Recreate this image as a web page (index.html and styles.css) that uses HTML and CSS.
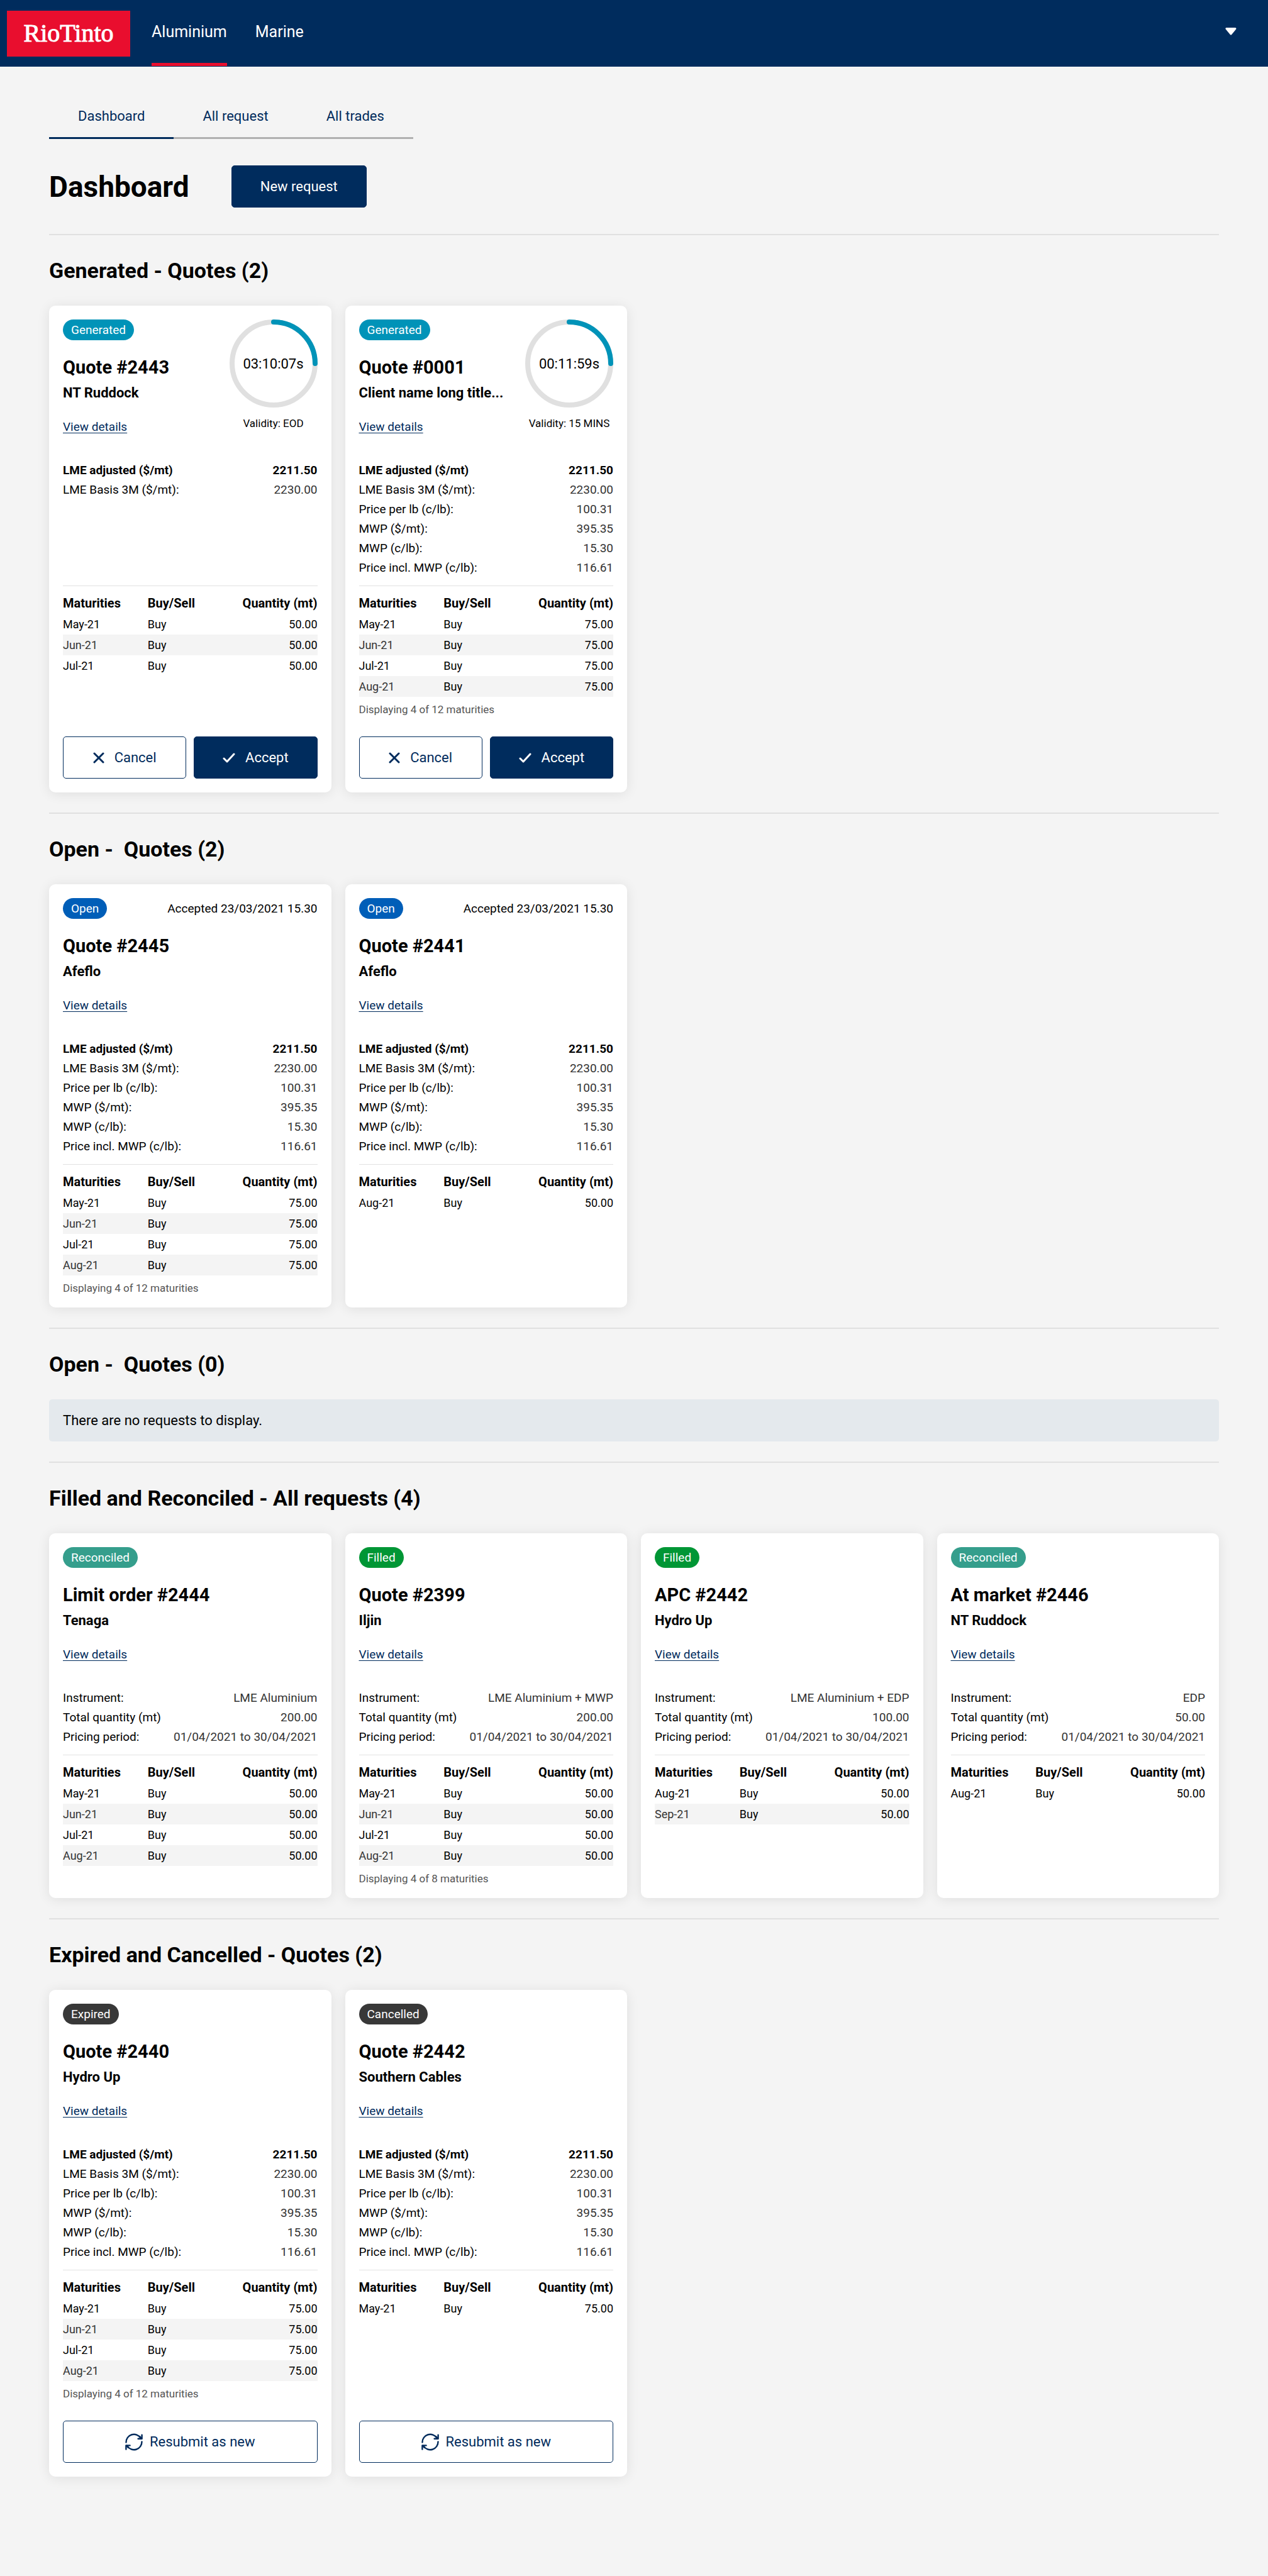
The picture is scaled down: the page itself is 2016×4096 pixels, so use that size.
FILE: index.html
```html
<!DOCTYPE html>
<html lang="en">
<head>
    <meta charset="UTF-8">
    <meta name="viewport" content="width=device-width, initial-scale=1.0">
    <title>Rio Tinto - Dashboard</title>
    <link rel="stylesheet" href="styles.css">
</head>
<body>
    <svg class="sprite" aria-hidden="true">
        <symbol id="icon-cross" viewBox="0 0 18 18">
            <path d="M2 2 L16 16 M16 2 L2 16" fill="none" stroke="currentColor" stroke-width="3" stroke-linecap="round"/>
        </symbol>
        <symbol id="icon-check" viewBox="0 0 20 18">
            <path d="M2 10 L7 15 L18 3" fill="none" stroke="currentColor" stroke-width="3" stroke-linecap="round" stroke-linejoin="round"/>
        </symbol>
        <symbol id="icon-refresh" viewBox="0 0 28 28">
            <g fill="none" stroke="currentColor" stroke-width="2.4" stroke-linecap="round" stroke-linejoin="round">
                <path d="M1.5 14.5 A12.5 12.5 0 0 1 24.6 7.6"/>
                <path d="M26.5 13.5 A12.5 12.5 0 0 1 3.4 20.4"/>
                <path d="M26.6 2.6 V8.8 H20.6"/>
                <path d="M1.4 25.6 V19.4 H7.6"/>
                <path d="M23 5.2 L26 8.2 M5 22.8 L2 19.8"/>
            </g>
        </symbol>
        <symbol id="icon-ring" viewBox="0 0 140 140">
            <circle cx="70" cy="70" r="66" fill="none" stroke="#e0e0e0" stroke-width="8"/>
            <path d="M70 4 A66 66 0 0 1 136 70" fill="none" stroke="#0093b8" stroke-width="8" stroke-linecap="round"/>
        </symbol>
    </svg>

    <header class="topbar">
        <a class="logo" href="#">RioTinto</a>
        <nav class="topnav">
            <a class="active" href="#">Aluminium</a>
            <a href="#">Marine</a>
        </nav>
        <button class="account" aria-label="Account menu">
            <svg width="18" height="12" viewBox="0 0 18 12"><path d="M2 1.5 H16 L9 10 Z" fill="#fff" stroke="#fff" stroke-width="3" stroke-linejoin="round"/></svg>
        </button>
    </header>

    <main>
        <nav class="tabs">
            <a class="active" href="#">Dashboard</a>
            <a href="#">All request</a>
            <a href="#">All trades</a>
        </nav>

        <div class="page-head">
            <h1>Dashboard</h1>
            <button class="btn primary">New request</button>
        </div>

        <section>
            <h2>Generated - Quotes (2)</h2>
            <div class="cards">
                <article class="card">
                    <div class="card-head">
                        <div class="title">
                            <span class="pill generated">Generated</span>
                            <h3>Quote #2443</h3>
                            <p class="client">NT Ruddock</p>
                            <a class="details" href="#">View details</a>
                        </div>
                        <div class="timer">
                            <div class="ring">
                                <svg width="140" height="140" aria-hidden="true"><use href="#icon-ring"/></svg>
                                <span>03:10:07s</span>
                            </div>
                            <p>Validity: EOD</p>
                        </div>
                    </div>
                    <dl class="prices">
                        <div class="main"><dt>LME adjusted ($/mt)</dt><dd>2211.50</dd></div>
                        <div><dt>LME Basis 3M ($/mt):</dt><dd>2230.00</dd></div>
                    </dl>
                    <table>
                        <thead><tr><th>Maturities</th><th>Buy/Sell</th><th>Quantity (mt)</th></tr></thead>
                        <tbody>
                            <tr><td>May-21</td><td>Buy</td><td>50.00</td></tr>
                            <tr><td>Jun-21</td><td>Buy</td><td>50.00</td></tr>
                            <tr><td>Jul-21</td><td>Buy</td><td>50.00</td></tr>
                        </tbody>
                    </table>
                    <div class="actions">
                        <button class="btn"><svg width="18" height="18"><use href="#icon-cross"/></svg>Cancel</button>
                        <button class="btn primary"><svg width="20" height="18"><use href="#icon-check"/></svg>Accept</button>
                    </div>
                </article>

                <article class="card">
                    <div class="card-head">
                        <div class="title">
                            <span class="pill generated">Generated</span>
                            <h3>Quote #0001</h3>
                            <p class="client">Client name long title...</p>
                            <a class="details" href="#">View details</a>
                        </div>
                        <div class="timer">
                            <div class="ring">
                                <svg width="140" height="140" aria-hidden="true"><use href="#icon-ring"/></svg>
                                <span>00:11:59s</span>
                            </div>
                            <p>Validity: 15 MINS</p>
                        </div>
                    </div>
                    <dl class="prices">
                        <div class="main"><dt>LME adjusted ($/mt)</dt><dd>2211.50</dd></div>
                        <div><dt>LME Basis 3M ($/mt):</dt><dd>2230.00</dd></div>
                        <div><dt>Price per lb (c/lb):</dt><dd>100.31</dd></div>
                        <div><dt>MWP ($/mt):</dt><dd>395.35</dd></div>
                        <div><dt>MWP (c/lb):</dt><dd>15.30</dd></div>
                        <div><dt>Price incl. MWP (c/lb):</dt><dd>116.61</dd></div>
                    </dl>
                    <table>
                        <thead><tr><th>Maturities</th><th>Buy/Sell</th><th>Quantity (mt)</th></tr></thead>
                        <tbody>
                            <tr><td>May-21</td><td>Buy</td><td>75.00</td></tr>
                            <tr><td>Jun-21</td><td>Buy</td><td>75.00</td></tr>
                            <tr><td>Jul-21</td><td>Buy</td><td>75.00</td></tr>
                            <tr><td>Aug-21</td><td>Buy</td><td>75.00</td></tr>
                        </tbody>
                    </table>
                    <p class="note">Displaying 4 of 12 maturities</p>
                    <div class="actions">
                        <button class="btn"><svg width="18" height="18"><use href="#icon-cross"/></svg>Cancel</button>
                        <button class="btn primary"><svg width="20" height="18"><use href="#icon-check"/></svg>Accept</button>
                    </div>
                </article>
            </div>
        </section>

        <section>
            <h2>Open -&nbsp; Quotes (2)</h2>
            <div class="cards">
                <article class="card">
                    <div class="card-head">
                        <div class="title">
                            <span class="pill open">Open</span>
                            <h3>Quote #2445</h3>
                            <p class="client">Afeflo</p>
                            <a class="details" href="#">View details</a>
                        </div>
                        <p class="accepted">Accepted 23/03/2021 15.30</p>
                    </div>
                    <dl class="prices">
                        <div class="main"><dt>LME adjusted ($/mt)</dt><dd>2211.50</dd></div>
                        <div><dt>LME Basis 3M ($/mt):</dt><dd>2230.00</dd></div>
                        <div><dt>Price per lb (c/lb):</dt><dd>100.31</dd></div>
                        <div><dt>MWP ($/mt):</dt><dd>395.35</dd></div>
                        <div><dt>MWP (c/lb):</dt><dd>15.30</dd></div>
                        <div><dt>Price incl. MWP (c/lb):</dt><dd>116.61</dd></div>
                    </dl>
                    <table>
                        <thead><tr><th>Maturities</th><th>Buy/Sell</th><th>Quantity (mt)</th></tr></thead>
                        <tbody>
                            <tr><td>May-21</td><td>Buy</td><td>75.00</td></tr>
                            <tr><td>Jun-21</td><td>Buy</td><td>75.00</td></tr>
                            <tr><td>Jul-21</td><td>Buy</td><td>75.00</td></tr>
                            <tr><td>Aug-21</td><td>Buy</td><td>75.00</td></tr>
                        </tbody>
                    </table>
                    <p class="note">Displaying 4 of 12 maturities</p>
                </article>

                <article class="card">
                    <div class="card-head">
                        <div class="title">
                            <span class="pill open">Open</span>
                            <h3>Quote #2441</h3>
                            <p class="client">Afeflo</p>
                            <a class="details" href="#">View details</a>
                        </div>
                        <p class="accepted">Accepted 23/03/2021 15.30</p>
                    </div>
                    <dl class="prices">
                        <div class="main"><dt>LME adjusted ($/mt)</dt><dd>2211.50</dd></div>
                        <div><dt>LME Basis 3M ($/mt):</dt><dd>2230.00</dd></div>
                        <div><dt>Price per lb (c/lb):</dt><dd>100.31</dd></div>
                        <div><dt>MWP ($/mt):</dt><dd>395.35</dd></div>
                        <div><dt>MWP (c/lb):</dt><dd>15.30</dd></div>
                        <div><dt>Price incl. MWP (c/lb):</dt><dd>116.61</dd></div>
                    </dl>
                    <table>
                        <thead><tr><th>Maturities</th><th>Buy/Sell</th><th>Quantity (mt)</th></tr></thead>
                        <tbody>
                            <tr><td>Aug-21</td><td>Buy</td><td>50.00</td></tr>
                        </tbody>
                    </table>
                </article>
            </div>
        </section>

        <section>
            <h2>Open -&nbsp; Quotes (0)</h2>
            <p class="empty">There are no requests to display.</p>
        </section>

        <section>
            <h2>Filled and Reconciled - All requests (4)</h2>
            <div class="cards">
                <article class="card">
                    <div class="card-head">
                        <div class="title">
                            <span class="pill reconciled">Reconciled</span>
                            <h3>Limit order #2444</h3>
                            <p class="client">Tenaga</p>
                            <a class="details" href="#">View details</a>
                        </div>
                    </div>
                    <dl>
                        <div><dt>Instrument:</dt><dd>LME Aluminium</dd></div>
                        <div><dt>Total quantity (mt)</dt><dd>200.00</dd></div>
                        <div><dt>Pricing period:</dt><dd>01/04/2021 to 30/04/2021</dd></div>
                    </dl>
                    <table>
                        <thead><tr><th>Maturities</th><th>Buy/Sell</th><th>Quantity (mt)</th></tr></thead>
                        <tbody>
                            <tr><td>May-21</td><td>Buy</td><td>50.00</td></tr>
                            <tr><td>Jun-21</td><td>Buy</td><td>50.00</td></tr>
                            <tr><td>Jul-21</td><td>Buy</td><td>50.00</td></tr>
                            <tr><td>Aug-21</td><td>Buy</td><td>50.00</td></tr>
                        </tbody>
                    </table>
                </article>

                <article class="card">
                    <div class="card-head">
                        <div class="title">
                            <span class="pill filled">Filled</span>
                            <h3>Quote #2399</h3>
                            <p class="client">Iljin</p>
                            <a class="details" href="#">View details</a>
                        </div>
                    </div>
                    <dl>
                        <div><dt>Instrument:</dt><dd>LME Aluminium + MWP</dd></div>
                        <div><dt>Total quantity (mt)</dt><dd>200.00</dd></div>
                        <div><dt>Pricing period:</dt><dd>01/04/2021 to 30/04/2021</dd></div>
                    </dl>
                    <table>
                        <thead><tr><th>Maturities</th><th>Buy/Sell</th><th>Quantity (mt)</th></tr></thead>
                        <tbody>
                            <tr><td>May-21</td><td>Buy</td><td>50.00</td></tr>
                            <tr><td>Jun-21</td><td>Buy</td><td>50.00</td></tr>
                            <tr><td>Jul-21</td><td>Buy</td><td>50.00</td></tr>
                            <tr><td>Aug-21</td><td>Buy</td><td>50.00</td></tr>
                        </tbody>
                    </table>
                    <p class="note">Displaying 4 of 8 maturities</p>
                </article>

                <article class="card">
                    <div class="card-head">
                        <div class="title">
                            <span class="pill filled">Filled</span>
                            <h3>APC #2442</h3>
                            <p class="client">Hydro Up</p>
                            <a class="details" href="#">View details</a>
                        </div>
                    </div>
                    <dl>
                        <div><dt>Instrument:</dt><dd>LME Aluminium + EDP</dd></div>
                        <div><dt>Total quantity (mt)</dt><dd>100.00</dd></div>
                        <div><dt>Pricing period:</dt><dd>01/04/2021 to 30/04/2021</dd></div>
                    </dl>
                    <table>
                        <thead><tr><th>Maturities</th><th>Buy/Sell</th><th>Quantity (mt)</th></tr></thead>
                        <tbody>
                            <tr><td>Aug-21</td><td>Buy</td><td>50.00</td></tr>
                            <tr><td>Sep-21</td><td>Buy</td><td>50.00</td></tr>
                        </tbody>
                    </table>
                </article>

                <article class="card">
                    <div class="card-head">
                        <div class="title">
                            <span class="pill reconciled">Reconciled</span>
                            <h3>At market #2446</h3>
                            <p class="client">NT Ruddock</p>
                            <a class="details" href="#">View details</a>
                        </div>
                    </div>
                    <dl>
                        <div><dt>Instrument:</dt><dd>EDP</dd></div>
                        <div><dt>Total quantity (mt)</dt><dd>50.00</dd></div>
                        <div><dt>Pricing period:</dt><dd>01/04/2021 to 30/04/2021</dd></div>
                    </dl>
                    <table>
                        <thead><tr><th>Maturities</th><th>Buy/Sell</th><th>Quantity (mt)</th></tr></thead>
                        <tbody>
                            <tr><td>Aug-21</td><td>Buy</td><td>50.00</td></tr>
                        </tbody>
                    </table>
                </article>
            </div>
        </section>

        <section>
            <h2>Expired and Cancelled - Quotes (2)</h2>
            <div class="cards">
                <article class="card">
                    <div class="card-head">
                        <div class="title">
                            <span class="pill closed">Expired</span>
                            <h3>Quote #2440</h3>
                            <p class="client">Hydro Up</p>
                            <a class="details" href="#">View details</a>
                        </div>
                    </div>
                    <dl class="prices">
                        <div class="main"><dt>LME adjusted ($/mt)</dt><dd>2211.50</dd></div>
                        <div><dt>LME Basis 3M ($/mt):</dt><dd>2230.00</dd></div>
                        <div><dt>Price per lb (c/lb):</dt><dd>100.31</dd></div>
                        <div><dt>MWP ($/mt):</dt><dd>395.35</dd></div>
                        <div><dt>MWP (c/lb):</dt><dd>15.30</dd></div>
                        <div><dt>Price incl. MWP (c/lb):</dt><dd>116.61</dd></div>
                    </dl>
                    <table>
                        <thead><tr><th>Maturities</th><th>Buy/Sell</th><th>Quantity (mt)</th></tr></thead>
                        <tbody>
                            <tr><td>May-21</td><td>Buy</td><td>75.00</td></tr>
                            <tr><td>Jun-21</td><td>Buy</td><td>75.00</td></tr>
                            <tr><td>Jul-21</td><td>Buy</td><td>75.00</td></tr>
                            <tr><td>Aug-21</td><td>Buy</td><td>75.00</td></tr>
                        </tbody>
                    </table>
                    <p class="note">Displaying 4 of 12 maturities</p>
                    <div class="actions">
                        <button class="btn resubmit"><svg width="28" height="28"><use href="#icon-refresh"/></svg>Resubmit as new</button>
                    </div>
                </article>

                <article class="card">
                    <div class="card-head">
                        <div class="title">
                            <span class="pill closed">Cancelled</span>
                            <h3>Quote #2442</h3>
                            <p class="client">Southern Cables</p>
                            <a class="details" href="#">View details</a>
                        </div>
                    </div>
                    <dl class="prices">
                        <div class="main"><dt>LME adjusted ($/mt)</dt><dd>2211.50</dd></div>
                        <div><dt>LME Basis 3M ($/mt):</dt><dd>2230.00</dd></div>
                        <div><dt>Price per lb (c/lb):</dt><dd>100.31</dd></div>
                        <div><dt>MWP ($/mt):</dt><dd>395.35</dd></div>
                        <div><dt>MWP (c/lb):</dt><dd>15.30</dd></div>
                        <div><dt>Price incl. MWP (c/lb):</dt><dd>116.61</dd></div>
                    </dl>
                    <table>
                        <thead><tr><th>Maturities</th><th>Buy/Sell</th><th>Quantity (mt)</th></tr></thead>
                        <tbody>
                            <tr><td>May-21</td><td>Buy</td><td>75.00</td></tr>
                        </tbody>
                    </table>
                    <div class="actions">
                        <button class="btn resubmit"><svg width="28" height="28"><use href="#icon-refresh"/></svg>Resubmit as new</button>
                    </div>
                </article>
            </div>
        </section>
    </main>
</body>
</html>
```

FILE: styles.css
```css
* {
    box-sizing: border-box;
}
body {
    margin: 0;
    font-family: Roboto, "Liberation Sans", sans-serif;
    font-size: 19px;
    background-color: #f4f4f4;
    color: #000;
}
h1, h2, h3, p, dl, dd {
    margin: 0;
}
a {
    color: #002b5c;
    text-decoration: none;
}
.sprite {
    display: none;
}

/* top bar */
.topbar {
    display: flex;
    height: 106px;
    padding: 0 50px 0 11px;
    background-color: #002c5d;
}
.logo {
    width: 196px;
    height: 73px;
    margin: 17px 34px 0 0;
    background-color: #e90e2e;
    color: #fff;
    font-family: "Liberation Serif", serif;
    font-size: 40px;
    line-height: 71px;
    text-align: center;
    -webkit-text-stroke: 1px #fff;
}
.topnav {
    display: flex;
    gap: 45px;
    flex: 1;
    align-items: flex-start;
}
.topnav a {
    padding-top: 2px;
    border-bottom: 5px solid transparent;
    color: #fff;
    font-size: 25px;
    line-height: 98px;
}
.topnav a.active {
    border-color: #e90e2e;
}
.account {
    height: 100px;
    padding: 2px 0 0;
    border: none;
    background: none;
    cursor: pointer;
}

/* page */
main {
    padding: 45px 78px 158px;
}
.tabs {
    display: inline-flex;
}
.tabs a {
    padding: 0 46px;
    border-bottom: 3px solid #b0b0b0;
    font-size: 22px;
    line-height: 67px;
}
.tabs a.active {
    border-color: #002b5c;
}
.page-head {
    display: flex;
    align-items: center;
    gap: 67px;
    margin: 42px 0;
}
h1 {
    font-size: 46px;
}
section {
    margin-bottom: 32px;
    border-top: 2px solid #e0e0e0;
}
section:last-child {
    margin-bottom: 0;
}
h2 {
    margin: 36px 0;
    font-size: 34px;
    line-height: 40px;
}
.empty {
    padding: 0 22px;
    border-radius: 5px;
    background-color: #e4e9ed;
    font-size: 22px;
    line-height: 67px;
}

/* buttons */
.btn {
    display: flex;
    align-items: center;
    justify-content: center;
    gap: 16px;
    height: 67px;
    padding: 0 45px;
    border: 1px solid #002b5c;
    border-radius: 5px;
    background-color: #fff;
    color: #002b5c;
    font-family: inherit;
    font-size: 22px;
    cursor: pointer;
}
.btn.primary {
    background-color: #002c5d;
    color: #fff;
}
.btn.resubmit {
    gap: 11px;
}

/* cards */
.cards {
    display: grid;
    grid-template-columns: repeat(4, minmax(0, 1fr));
    gap: 22px;
}
.card {
    display: flex;
    flex-direction: column;
    padding: 22px;
    border-radius: 10px;
    background-color: #fff;
    box-shadow: 0 2px 20px rgba(0, 0, 0, 0.09);
}
.card-head {
    display: flex;
    align-items: flex-start;
    white-space: nowrap;
}
.title {
    flex: 1;
    min-width: 0;
}
.pill {
    display: block;
    width: fit-content;
    padding: 0 13px;
    border-radius: 17px;
    color: #fff;
    line-height: 33px;
}
.generated {
    background-color: #0093b8;
}
.open {
    background-color: #005eb8;
}
.filled {
    background-color: #009635;
}
.reconciled {
    background-color: #359e8c;
}
.closed {
    background-color: #383838;
}
h3 {
    margin-top: 26px;
    font-size: 29px;
    line-height: 34px;
}
.client {
    margin-top: 11px;
    font-size: 22px;
    font-weight: bold;
    line-height: 26px;
}
.details {
    display: block;
    width: fit-content;
    margin-top: 29px;
    line-height: 24px;
    text-decoration: underline;
    text-underline-offset: 3px;
}
.accepted {
    line-height: 33px;
}
.timer {
    text-align: center;
}
.timer p {
    margin-top: 15px;
    font-size: 17px;
    line-height: 20px;
}
.ring {
    display: grid;
    place-items: center;
}
.ring svg, .ring span {
    grid-area: 1 / 1;
}
.ring span {
    font-size: 22px;
}
dl {
    margin-top: 41px;
    line-height: 31px;
}
dl div {
    display: flex;
    justify-content: space-between;
}
dd {
    color: #333;
}
.main, .main dd {
    color: #000;
    font-weight: bold;
}
.prices {
    min-height: 186px;
}
table {
    width: 100%;
    margin-top: 13px;
    border-top: 1px solid #e2e2e2;
    border-collapse: collapse;
    table-layout: fixed;
    line-height: 33px;
}
thead::before {
    content: "";
    display: block;
    height: 11px;
}
th, td {
    padding: 0;
    text-align: left;
}
th {
    font-size: 20px;
}
td {
    font-size: 18px;
}
th:last-child, td:last-child {
    text-align: right;
}
tbody tr:nth-child(even) {
    background-color: #f4f4f4;
}
tbody tr:nth-child(even) td:first-child {
    color: #333;
}
.note {
    padding-top: 12px;
    color: #555;
    font-size: 17px;
    line-height: 17px;
}
.actions {
    display: flex;
    gap: 12px;
    margin-top: auto;
    padding-top: 34px;
}
.actions .btn {
    flex: 1;
    padding: 0;
}
```
